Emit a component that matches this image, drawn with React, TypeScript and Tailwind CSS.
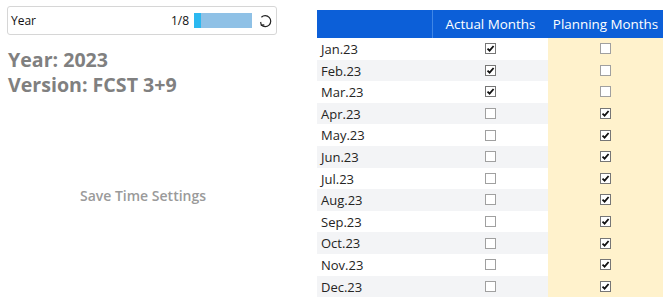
const months = [
  "Jan.23", "Feb.23", "Mar.23", "Apr.23", "May.23", "Jun.23",
  "Jul.23", "Aug.23", "Sep.23", "Oct.23", "Nov.23", "Dec.23",
]

function CheckBox({ checked }: { checked: boolean }) {
  return (
    <span
      className={`flex h-[11px] w-[11px] items-center justify-center border bg-white ${
        checked ? "border-[#767676]" : "border-[#a0a0a0]"
      }`}
    >
      {checked && (
        <svg width="9" height="9" viewBox="0 0 9 9">
          <path d="M1.5 4.6 L3.6 6.7 L7.6 2" fill="none" stroke="#111" strokeWidth="1.8" />
        </svg>
      )}
    </span>
  )
}

function Slicer() {
  return (
    <div className="ml-[7px] mt-[6px] flex h-[29px] w-[270px] items-center rounded-[3px] border border-[#d6d6d6] bg-white pl-[3px] pr-[3px] text-[12px] text-[#111]">
      <span className="flex-1">Year</span>
      <span className="mr-[5px]">1/8</span>
      <div className="flex h-[15px] w-[58px] bg-[#8fc1e6]">
        <div className="w-[7px] bg-[#2bb8f0]" />
      </div>
      {/* reset icon */}
      <svg className="ml-[5px]" width="16" height="16" viewBox="0 0 16 16">
        <path d="M4.4 4.2 A5.5 5.5 0 1 1 4.3 12" fill="none" stroke="#222" strokeWidth="1.2" />
        <path d="M3.6 9 L4.3 12.2 L7.3 11.9" fill="none" stroke="#222" strokeWidth="1.2" />
      </svg>
    </div>
  )
}

export default function App() {
  return (
    <div className="flex h-[303px] w-[670px] bg-white font-['Open_Sans',sans-serif]">
      {/* Left panel */}
      <div className="flex w-[310px] flex-col">
        <Slicer />
        <div className="ml-[8px] mt-[12px] text-[19.6px] font-bold leading-[25px] text-[#808080]">
          <div>Year: 2023</div>
          <div>Version: FCST 3+9</div>
        </div>
        <div className="mt-[88px] w-[286px] text-center text-[14px] font-semibold text-[#9a9a9a]">
          Save Time Settings
        </div>
      </div>

      {/* Table */}
      <div className="ml-[7px] mt-[10px] w-[346px]">
        <div className="grid h-[28px] grid-cols-[116px_115px_115px] bg-[#0c5fd8] text-[13.4px] text-white">
          <div className="border-r border-[#3f86e6]" />
          <div className="flex items-center justify-center">Actual Months</div>
          <div className="flex items-center justify-center">Planning Months</div>
        </div>
        {months.map((m, i) => (
          <div
            key={m}
            className={`grid h-[21.6px] grid-cols-[116px_115px_115px] text-[13px] text-[#252423] ${
              i % 2 === 1 ? "bg-[#f3f4f6]" : "bg-white"
            }`}
          >
            <div className="flex items-center pl-[4px] pt-[2px]">{m}</div>
            <div className="flex items-center justify-center">
              <CheckBox checked={i < 3} />
            </div>
            <div className="flex items-center justify-center bg-[#fff2cc]">
              <CheckBox checked={i >= 3} />
            </div>
          </div>
        ))}
      </div>
    </div>
  )
}
